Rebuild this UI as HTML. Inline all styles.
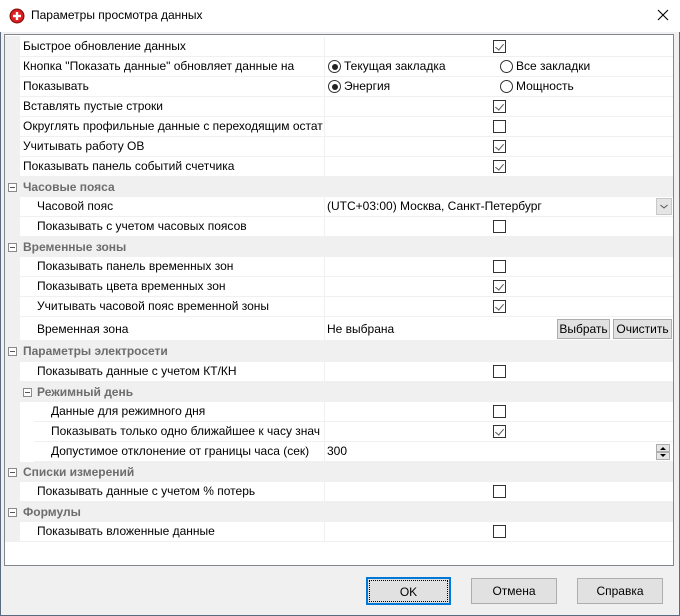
<!DOCTYPE html>
<html><head><meta charset="utf-8"><style>
*{margin:0;padding:0;box-sizing:border-box}
body{width:680px;height:616px;background:#f0f0f0;font-family:"Liberation Sans",sans-serif;font-size:12px;color:#000;position:relative;overflow:hidden}
.win{position:absolute;left:0;top:0;width:680px;height:616px;border:1px solid #5a6a80;border-top:none}
.title{position:absolute;left:0;top:0;width:680px;height:32px;background:#fff}
.grid{position:absolute;left:4px;top:34px;width:670px;height:532px;background:#fff;border:1px solid #828790}
.in{position:absolute;left:0;top:1px;right:0;bottom:0}
.gm{position:absolute;left:0;top:0;width:15px;height:506px;background:#f0f0f0}
.r{position:absolute;height:20px;background:#fff;border-bottom:1px solid #f0f0f0;right:0;line-height:19px;white-space:nowrap;overflow:hidden}
.r .t{position:absolute;top:0}
.vs{position:absolute;left:304px;top:0;width:1px;height:20px;background:#f0f0f0}
.c{position:absolute;left:0;right:0;height:20px;background:#f0f0f0;line-height:20px;font-weight:bold;color:#6d6d6d}
.pm{position:absolute;top:6px;width:9px;height:9px;border:1px solid #8a8a8a;background:#fff}
.pm:after{content:"";position:absolute;left:1px;top:3px;width:5px;height:1px;background:#555}
.cb{position:absolute;top:3px;width:13px;height:13px;border:1px solid #333;background:#fff}
.ck:after{content:"";position:absolute;left:3px;top:1px;width:4px;height:7px;border:solid #555;border-width:0 1.5px 1.5px 0;transform:rotate(40deg)}
.rd{position:absolute;top:3px;width:13px;height:13px;border:1px solid #333;border-radius:50%;background:#fff}
.rd.on:after{content:"";position:absolute;left:2.5px;top:2.5px;width:6px;height:6px;border-radius:50%;background:#222}
.btn{position:absolute;background:#e1e1e1;border:1px solid #adadad;text-align:center}
</style></head><body>
<div class="win"></div>
<div class="title">
<svg style="position:absolute;left:9px;top:8px" width="16" height="16" viewBox="0 0 16 16"><circle cx="8" cy="8" r="7.5" fill="#8a1010"/><circle cx="8" cy="8" r="6.2" fill="#e02020"/><rect x="6.8" y="4" width="2.4" height="8" fill="#fff"/><rect x="4" y="6.8" width="8" height="2.4" fill="#fff"/></svg>
<div style="position:absolute;left:31px;top:8px;font-size:12px">Параметры просмотра данных</div>
<svg style="position:absolute;left:657px;top:9px" width="12" height="12" viewBox="0 0 12 12"><path d="M1 1L11 11M11 1L1 11" stroke="#000" stroke-width="1.1"/></svg>
</div>
<div class="grid"><div class="in">
<div class="gm"></div>
<div class="r" style="left:15px;top:1px"><span class="t" style="left:3px">Быстрое обновление данных</span><div class="vs"></div><div class="cb ck" style="left:473px"></div></div>
<div class="r" style="left:15px;top:21px"><span class="t" style="left:3px">Кнопка "Показать данные" обновляет данные на</span><div class="vs"></div><div class="rd on" style="left:308px"></div><span class="t" style="left:324px">Текущая закладка</span><div class="rd" style="left:480px"></div><span class="t" style="left:496px">Все закладки</span></div>
<div class="r" style="left:15px;top:41px"><span class="t" style="left:3px">Показывать</span><div class="vs"></div><div class="rd on" style="left:308px"></div><span class="t" style="left:324px">Энергия</span><div class="rd" style="left:480px"></div><span class="t" style="left:496px">Мощность</span></div>
<div class="r" style="left:15px;top:61px"><span class="t" style="left:3px">Вставлять пустые строки</span><div class="vs"></div><div class="cb ck" style="left:473px"></div></div>
<div class="r" style="left:15px;top:81px"><span class="t" style="left:3px">Округлять профильные данные с переходящим остат</span><div class="vs"></div><div class="cb" style="left:473px"></div></div>
<div class="r" style="left:15px;top:101px"><span class="t" style="left:3px">Учитывать работу ОВ</span><div class="vs"></div><div class="cb ck" style="left:473px"></div></div>
<div class="r" style="left:15px;top:121px"><span class="t" style="left:3px">Показывать панель событий счетчика</span><div class="vs"></div><div class="cb ck" style="left:473px"></div></div>

<div class="c" style="top:141px"><div class="pm" style="left:3px"></div><span style="position:absolute;left:18px">Часовые пояса</span></div>
<div class="r" style="left:15px;top:161px"><span class="t" style="left:17px">Часовой пояс</span><div class="vs"></div><span class="t" style="left:307px">(UTC+03:00) Москва, Санкт-Петербург</span><div style="position:absolute;left:636px;top:1px;width:16px;height:17px;background:#e5e5e5;border:1px solid #c8c8c8"><svg width="14" height="15" viewBox="0 0 14 15"><path d="M3.5 6L7 9L10.5 6" stroke="#555" fill="none"/></svg></div></div>
<div class="r" style="left:15px;top:181px"><span class="t" style="left:17px">Показывать с учетом часовых поясов</span><div class="vs"></div><div class="cb" style="left:473px"></div></div>

<div class="c" style="top:201px"><div class="pm" style="left:3px"></div><span style="position:absolute;left:18px">Временные зоны</span></div>
<div class="r" style="left:15px;top:221px"><span class="t" style="left:17px">Показывать панель временных зон</span><div class="vs"></div><div class="cb" style="left:473px"></div></div>
<div class="r" style="left:15px;top:241px"><span class="t" style="left:17px">Показывать цвета временных зон</span><div class="vs"></div><div class="cb ck" style="left:473px"></div></div>
<div class="r" style="left:15px;top:261px"><span class="t" style="left:17px">Учитывать часовой пояс временной зоны</span><div class="vs"></div><div class="cb ck" style="left:473px"></div></div>
<div class="r" style="left:15px;top:281px;height:24px;line-height:24px"><span class="t" style="left:17px">Временная зона</span><div class="vs" style="height:24px"></div><span class="t" style="left:307px">Не выбрана</span>
<div class="btn" style="left:537px;top:2px;width:53px;height:20px;line-height:18px">Выбрать</div><div class="btn" style="left:593px;top:2px;width:59px;height:20px;line-height:18px">Очистить</div></div>

<div class="c" style="top:305px;height:21px"><div class="pm" style="left:3px"></div><span style="position:absolute;left:18px">Параметры электросети</span></div>
<div class="r" style="left:15px;top:326px"><span class="t" style="left:17px">Показывать данные с учетом КТ/КН</span><div class="vs"></div><div class="cb" style="left:473px"></div></div>
<div class="c" style="top:346px;left:15px"><div class="pm" style="left:3px"></div><span style="position:absolute;left:17px">Режимный день</span></div>
<div class="r" style="left:29px;top:366px"><span class="t" style="left:17px">Данные для режимного дня</span><div class="vs" style="left:290px"></div><div class="cb" style="left:459px"></div></div>
<div class="r" style="left:29px;top:386px"><span class="t" style="left:17px">Показывать только одно ближайшее к часу знач</span><div class="vs" style="left:290px"></div><div class="cb ck" style="left:459px"></div></div>
<div class="r" style="left:29px;top:406px"><span class="t" style="left:17px">Допустимое отклонение от границы часа (сек)</span><div class="vs" style="left:290px"></div><span class="t" style="left:293px">300</span>
<div style="position:absolute;left:622px;top:2px;width:14px;height:8px;background:#e5e5e5;border:1px solid #adadad"><svg width="12" height="6" viewBox="0 0 12 6" style="position:absolute;top:0"><path d="M3 5L6 2L9 5Z" fill="#000"/></svg></div>
<div style="position:absolute;left:622px;top:10px;width:14px;height:8px;background:#e5e5e5;border:1px solid #adadad"><svg width="12" height="6" viewBox="0 0 12 6" style="position:absolute;top:0"><path d="M3 1L6 4L9 1Z" fill="#000"/></svg></div></div>

<div class="c" style="top:426px"><div class="pm" style="left:3px"></div><span style="position:absolute;left:18px">Списки измерений</span></div>
<div class="r" style="left:15px;top:446px"><span class="t" style="left:17px">Показывать данные с учетом % потерь</span><div class="vs"></div><div class="cb" style="left:473px"></div></div>
<div class="c" style="top:466px"><div class="pm" style="left:3px"></div><span style="position:absolute;left:18px">Формулы</span></div>
<div class="r" style="left:15px;top:486px"><span class="t" style="left:17px">Показывать вложенные данные</span><div class="vs"></div><div class="cb" style="left:473px"></div></div>
</div></div>

<div class="btn" style="left:366px;top:577px;width:85px;height:28px;line-height:26px;border:2px solid #0078d7"><div style="position:absolute;left:1px;top:1px;right:1px;bottom:1px;border:1px dotted #000"></div>OK</div>
<div class="btn" style="left:471px;top:578px;width:86px;height:26px;line-height:24px">Отмена</div>
<div class="btn" style="left:577px;top:578px;width:86px;height:26px;line-height:24px">Справка</div>
</body></html>
